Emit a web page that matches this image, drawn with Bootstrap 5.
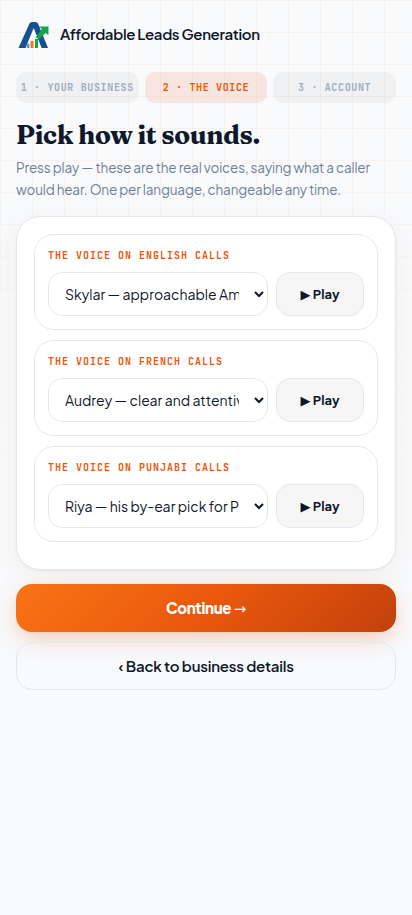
<!DOCTYPE html>
<html lang="en">
<head>
<meta charset="utf-8">
<meta name="viewport" content="width=device-width, initial-scale=1">
<title>Affordable Leads Generation</title>
<link href="https://cdn.jsdelivr.net/npm/bootstrap@5.3.0/dist/css/bootstrap.min.css" rel="stylesheet">
<style>
  body {
    min-height: 915px;
    background: #f8fafc;
    color: #0f172a;
    font-family: "Plus Jakarta Sans", Inter, sans-serif;
    letter-spacing: -.145px;
    position: relative;
  }
  /* faint squared-paper backdrop that fades down the page */
  body::before {
    content: "";
    position: absolute;
    inset: 0 0 auto 0;
    height: 480px;
    z-index: -1;
    background-image:
      linear-gradient(to right, rgba(249, 100, 22, .06) 1px, transparent 1px),
      linear-gradient(to bottom, rgba(249, 100, 22, .06) 1px, transparent 1px);
    background-size: 32px 32px;
    -webkit-mask-image: linear-gradient(#000 25%, transparent 98%);
    mask-image: linear-gradient(#000 25%, transparent 98%);
  }
  .brand-name { font-size: 15px; font-weight: 600; line-height: 24px; margin-left: 10px; letter-spacing: -.35px; }
  .steps { gap: 6px; margin-top: 20px; }
  .step {
    flex: 1 1 0;
    height: 31px;
    border-radius: 10px;
    background: rgba(20, 20, 20, .04);
    color: #a0aec0;
    font: 700 10px/31px "JetBrains Mono", "DejaVu Sans Mono", monospace;
    letter-spacing: .65px;
    text-align: center;
    white-space: nowrap;
  }
  .step.current { background: rgba(240, 90, 20, .12); color: #ea580c; }
  .headline {
    font: 700 26px/32px Fraunces, "Liberation Serif", serif;
    letter-spacing: -.4px;
    margin: 16px 0 6px;
  }
  .intro { font-size: 13.5px; line-height: 21.6px; color: #718096; white-space: nowrap; }
  .panel {
    margin-top: 16px;
    padding: 17px;
    border: 1px solid #e2e8f0;
    border-radius: 24px;
    background: #fff;
    box-shadow: 0 1px 3px rgba(15, 23, 42, .05), 0 8px 32px rgba(194, 65, 12, .06);
  }
  .voice { height: 96px; margin-bottom: 10px; padding: 14px 13px 13px; border: 1px solid #e2e8f0; border-radius: 20px; }
  .voice-label {
    display: block;
    color: #ea580c;
    font: 700 10px/14px "JetBrains Mono", "DejaVu Sans Mono", monospace;
    letter-spacing: 1px;
    margin-bottom: 9px;
  }
  .voice .form-select {
    -webkit-appearance: auto;
    appearance: auto;
    width: 220px;
    height: 44px;
    padding: 0 12px 0 12px;
    border: 1px solid #e2e8f0;
    border-radius: 14px;
    background: #fff;
    color: #0f172a;
    font-size: 14px;
    letter-spacing: normal;
  }
  .play {
    width: 88px;
    height: 44px;
    padding: 2px 0 0;
    border: 1px solid #e2e8f0;
    border-radius: 14px;
    background: #f6f6f6;
    color: #0f172a;
    font-size: 13px;
    font-weight: 700;
    letter-spacing: 0;
  }
  .play-mark { font-family: "DejaVu Sans", sans-serif; }
  .action { height: 48px; border-radius: 16px; font-size: 15px; letter-spacing: -.2px; }
  .go {
    margin-top: 14px;
    padding: 8px 12px 6px;
    border: 0;
    color: #fff;
    font-weight: 800;
    letter-spacing: -.3px;
    background: linear-gradient(135deg, #f97316, #ea580c 50%, #c2410c);
    box-shadow: 0 8px 24px -4px rgba(234, 88, 12, .35);
  }
  .arrow { font-family: "DejaVu Sans", sans-serif; font-weight: 400; }
  .back { margin-top: 10px; border: 1px solid #e2e8f0; color: #0f172a; font-weight: 600; }
</style>
<script src="https://cdn.jsdelivr.net/npm/bootstrap@5.3.0/dist/js/bootstrap.bundle.min.js"></script>
</head>
<body>
<main class="px-3 pt-3">
  <header class="d-flex align-items-center py-0">
    <svg class="d-block" width="34" height="36" viewBox="0 -2 34 36" aria-hidden="true">
      <path d="M2.500 30 13.500 5.500Q14.200 4 16 4h3.500Q21.300 4 22 5.500L32 30h-6.500L17.700 11 10 30z" fill="#174f91"/>
      <path d="M17.700 10 9.500 30h16z" fill="#f8fafc"/>
      <path d="M10.700 25.500h2.600V30h-2.600z" fill="#5b94d6"/>
      <path d="M14.500 23h3v7h-3z" fill="#f97316"/>
      <path d="M19 21h3v9h-3z" fill="#16a34a"/>
      <path d="M19.500 19.500 26 11l-3.500-2.500H32.500V17l-3-2-6 6z" fill="#16a34a"/>
    </svg>
    <span class="brand-name">Affordable Leads Generation</span>
  </header>
  <nav class="steps d-flex" aria-label="Progress">
    <div class="step">1 · YOUR BUSINESS</div>
    <div class="step current">2 · THE VOICE</div>
    <div class="step">3 · ACCOUNT</div>
  </nav>
  <h1 class="headline">Pick how it sounds.</h1>
  <p class="intro mb-0">Press play — these are the real voices, saying what a caller<br>would hear. One per language, changeable any time.</p>
  <section class="panel">
    <div class="voice">
      <label class="voice-label" for="v-en">THE VOICE ON ENGLISH CALLS</label>
      <div class="d-flex gap-2">
        <select class="form-select" id="v-en"><option>Skylar — approachable American</option></select>
        <button class="btn play" type="button"><span class="play-mark">▶</span> Play</button>
      </div>
    </div>
    <div class="voice">
      <label class="voice-label" for="v-fr">THE VOICE ON FRENCH CALLS</label>
      <div class="d-flex gap-2">
        <select class="form-select" id="v-fr"><option>Audrey — clear and attentive</option></select>
        <button class="btn play" type="button"><span class="play-mark">▶</span> Play</button>
      </div>
    </div>
    <div class="voice">
      <label class="voice-label" for="v-pa">THE VOICE ON PUNJABI CALLS</label>
      <div class="d-flex gap-2">
        <select class="form-select" id="v-pa"><option>Riya — his by-ear pick for Punjabi</option></select>
        <button class="btn play" type="button"><span class="play-mark">▶</span> Play</button>
      </div>
    </div>
  </section>
  <button class="btn action go w-100" type="button">Continue <span class="arrow">→</span></button>
  <button class="btn action back w-100" type="button">‹ Back to business details</button>
</main>
</body>
</html>
